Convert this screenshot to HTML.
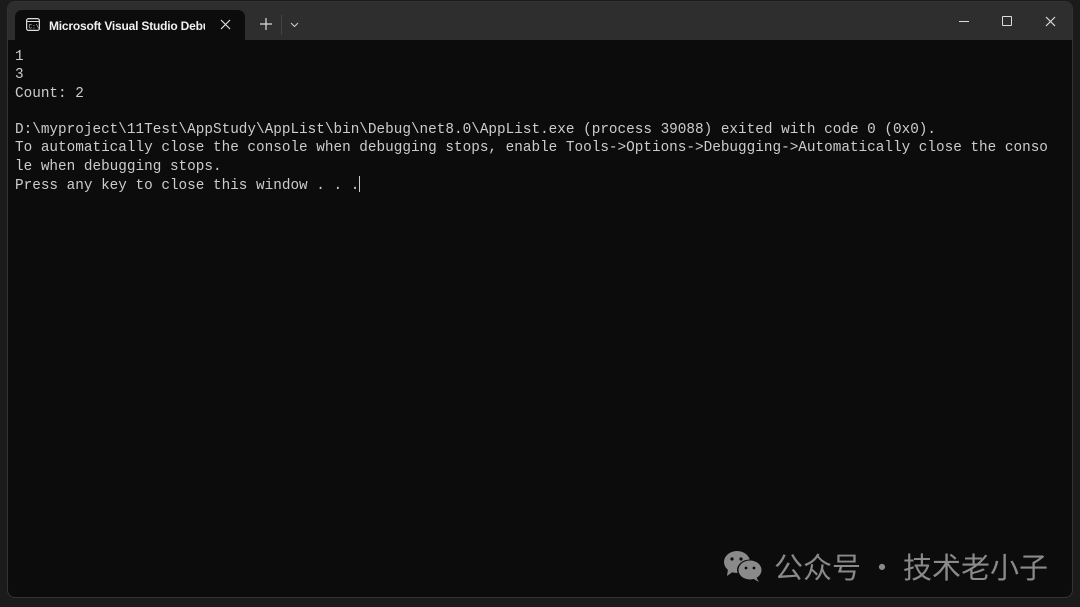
<!DOCTYPE html>
<html><head><meta charset="utf-8"><style>
html,body{margin:0;padding:0;width:1080px;height:607px;overflow:hidden;background:#1b1b1b;}
.win{position:absolute;left:7px;top:1px;width:1066px;height:597px;background:#0c0c0c;border-radius:8px;overflow:hidden;border:1px solid #333;box-sizing:border-box;}
.title{position:absolute;left:0;top:0;width:100%;height:38px;background:#2e2e2e;}
.tab{position:absolute;left:7px;top:8px;width:230px;height:30px;background:#0c0c0c;border-radius:7px 7px 0 0;}
.tabtxt{position:absolute;left:34px;top:9px;font:bold 12px "Liberation Sans",sans-serif;color:#f0f0f0;width:156px;overflow:hidden;white-space:nowrap;letter-spacing:-0.2px;}
.con{position:absolute;left:7px;top:46px;font-family:"Liberation Mono",monospace;font-size:14.35px;line-height:18.25px;color:#cccccc;white-space:pre;}
.wm{position:absolute;left:722px;top:545px;font:29px "Noto Sans CJK SC",sans-serif;color:#8a8a8a;display:flex;align-items:center;}
</style></head><body>
<div class="win">
<div class="title">
<div class="tab">
<svg style="position:absolute;left:11px;top:8px" width="14" height="13" viewBox="0 0 14 13"><rect x="0.6" y="0.6" width="12.8" height="11.8" rx="2" fill="none" stroke="#ddd" stroke-width="1.2"/><line x1="0.6" y1="3.5" x2="13.4" y2="3.5" stroke="#ddd"/><text x="2.5" y="10.5" font-size="6" fill="#ddd" font-family="Liberation Mono">C:\</text></svg>
<div class="tabtxt">Microsoft Visual Studio Debug</div>
<svg style="position:absolute;left:205px;top:9px" width="11" height="11"><path d="M1 1L10 10M10 1L1 10" stroke="#ddd" stroke-width="1.2"/></svg>
</div>
<svg style="position:absolute;left:252px;top:16px" width="12" height="12"><path d="M6 0V12M0 6H12" stroke="#ddd" stroke-width="1.2"/></svg>
<div style="position:absolute;left:273px;top:13px;width:1px;height:20px;background:#444"></div>
<svg style="position:absolute;left:282px;top:20px" width="9" height="6"><path d="M1 1L4.5 4.5L8 1" stroke="#ccc" fill="none" stroke-width="1.1"/></svg>
<div style="position:absolute;left:951px;top:19px;width:10px;height:1px;background:#ddd"></div>
<div style="position:absolute;left:994px;top:14px;width:8px;height:8px;border:1.2px solid #ddd;border-radius:1px"></div>
<svg style="position:absolute;left:1037px;top:14px" width="11" height="11"><path d="M1 1L10 10M10 1L1 10" stroke="#ddd" stroke-width="1.2"/></svg>
</div>
<div class="con">1
3
Count: 2

D:\myproject\11Test\AppStudy\AppList\bin\Debug\net8.0\AppList.exe (process 39088) exited with code 0 (0x0).
To automatically close the console when debugging stops, enable Tools-&gt;Options-&gt;Debugging-&gt;Automatically close the conso
le when debugging stops.
Press any key to close this window . . .<span style="display:inline-block;width:1px;height:16px;background:#ccc;vertical-align:-3px"></span></div>
</div>
<div class="wm">
<svg width="44" height="34" viewBox="0 0 44 34" style="margin-right:8px"><ellipse cx="15" cy="13" rx="13" ry="11" fill="#8a8a8a"/><path d="M6 20L5 27L12 22Z" fill="#8a8a8a"/><ellipse cx="28" cy="21" rx="13" ry="10.5" fill="#0c0c0c"/><ellipse cx="28" cy="21" rx="11.5" ry="9.5" fill="#8a8a8a"/><path d="M34 28L37 33L30 29Z" fill="#8a8a8a"/><circle cx="10" cy="10" r="1.6" fill="#0c0c0c"/><circle cx="19" cy="10" r="1.6" fill="#0c0c0c"/><circle cx="24" cy="19" r="1.4" fill="#0c0c0c"/><circle cx="32" cy="19" r="1.4" fill="#0c0c0c"/></svg>
<span>公众号 · 技术老小子</span>
</div>
</body></html>
